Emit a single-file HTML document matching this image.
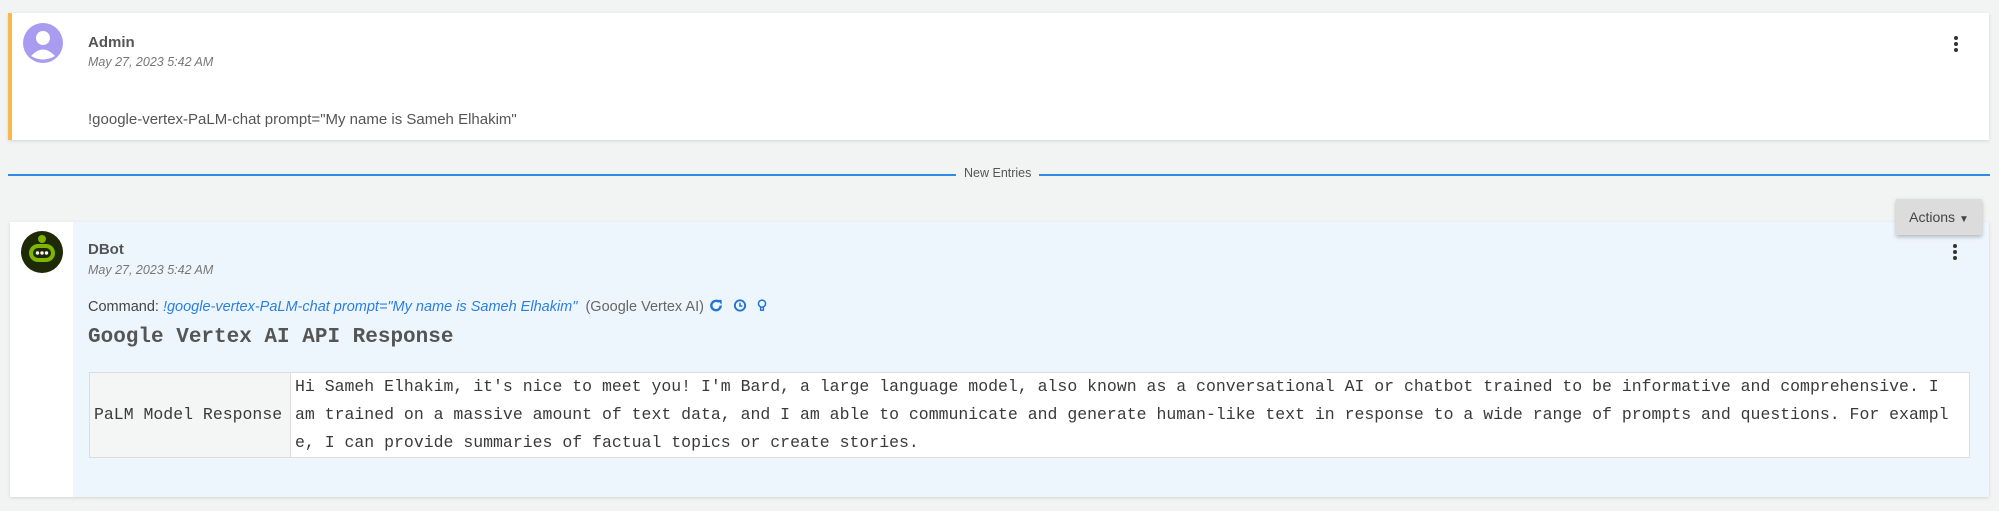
<!DOCTYPE html>
<html><head><meta charset="utf-8">
<style>
html,body{margin:0;padding:0;width:1999px;height:511px;overflow:hidden;background:#f2f3f3;font-family:"Liberation Sans",sans-serif;}
.card{position:absolute;background:#fff;box-shadow:0 1px 3px rgba(0,0,0,.12);}
#c1{left:8px;top:13px;width:1981px;height:127px;border-left:4px solid #f6b94f;box-sizing:border-box;}
.name{position:absolute;font-size:15px;color:#555;font-weight:bold;}
.date{position:absolute;font-size:12.5px;color:#777;font-style:italic;}
.dots{position:absolute;width:4px;}
.dots i{display:block;width:4px;height:4px;border-radius:50%;background:#333;margin-bottom:2px;}
#sep{position:absolute;left:8px;top:174px;width:1982px;height:2px;background:#2f8ae6;}
#sepl{position:absolute;left:956px;top:166px;padding:0 8px;background:#f2f3f3;font-size:12.5px;color:#555;}
#c2{left:10px;top:222px;width:1979px;height:275px;background:#eef6fd;}
#strip{position:absolute;left:0;top:0;width:63px;height:100%;background:#fff;}
#act{position:absolute;left:1896px;top:199px;width:86px;height:36px;background:#dcdcdc;box-shadow:0 2px 4px rgba(0,0,0,.25);font-size:14px;color:#444;line-height:36px;text-align:center;}
table{position:absolute;left:79px;top:150px;border-collapse:collapse;font-family:"Liberation Mono",monospace;font-size:16.5px;color:#3a3a3a;background:#fff;}
td{border:1px solid #ddd;padding:0 5px;line-height:28px;}
td.l{background:#f4f5f5;width:192px;white-space:nowrap;padding:0 4px;}
td.r{width:1670px;white-space:nowrap;padding:0 4px;}
</style></head><body>
<div class="card" id="c1">
  <svg style="position:absolute;left:11px;top:10px" width="40" height="40" viewBox="0 0 40 40"><circle cx="20" cy="20" r="20" fill="#a99cf0"/><circle cx="20" cy="15" r="7" fill="#fff"/><path d="M8 33 Q20 20 32 33 Q20 40 8 33Z" fill="#fff"/></svg>
  <div class="name" style="left:76px;top:21px">Admin</div>
  <div class="date" style="left:76px;top:42px">May 27, 2023 5:42 AM</div>
  <div style="position:absolute;left:76px;top:98px;font-size:15px;color:#555">!google-vertex-PaLM-chat prompt="My name is Sameh Elhakim"</div>
  <div class="dots" style="left:1942px;top:23px"><i></i><i></i><i></i></div>
</div>
<div id="sep"></div>
<div id="sepl">New Entries</div>
<div class="card" id="c2">
  <div id="strip"></div>
  <svg style="position:absolute;left:11px;top:9px" width="42" height="42" viewBox="0 0 42 42"><circle cx="21" cy="21" r="21" fill="#1e2a07"/><circle cx="21" cy="8" r="4" fill="#7db500"/><rect x="8" y="13" width="26" height="18" rx="9" fill="#7db500"/><rect x="12" y="17" width="18" height="10" rx="5" fill="#1e2a07"/><circle cx="16.5" cy="22" r="1.7" fill="#fff"/><circle cx="21" cy="22" r="1.7" fill="#fff"/><circle cx="25.5" cy="22" r="1.7" fill="#fff"/></svg>
  <div class="name" style="left:78px;top:19px">DBot</div>
  <div class="date" style="left:78px;top:41px">May 27, 2023 5:42 AM</div>
  <div class="dots" style="left:1943px;top:22px"><i></i><i></i><i></i></div>
  <div style="position:absolute;left:78px;top:76px;font-size:14.5px;color:#444;white-space:nowrap">Command: <span style="color:#2a7ee0;font-style:italic">!google-vertex-PaLM-chat prompt="My name is Sameh Elhakim"</span> <span style="color:#666">&nbsp;(Google Vertex AI)</span>
  <svg width="16" height="15" viewBox="0 0 16 16" style="vertical-align:-2px"><path d="M13 8A5 5 0 1 1 11 4" fill="none" stroke="#1f72d6" stroke-width="2.5"/><path d="M9 2h5v5z" fill="#1f72d6"/></svg>
  <svg width="16" height="15" viewBox="0 0 16 16" style="vertical-align:-2px;margin-left:4px"><circle cx="8" cy="8" r="5.5" fill="none" stroke="#1f72d6" stroke-width="2"/><path d="M8 5v3.5H10.5" fill="none" stroke="#1f72d6" stroke-width="1.6"/></svg>
  <svg width="12" height="15" viewBox="0 0 12 16" style="vertical-align:-2px;margin-left:4px"><circle cx="6" cy="6" r="3.8" fill="none" stroke="#1f72d6" stroke-width="1.6"/><path d="M4.5 10v3h3v-3" fill="none" stroke="#1f72d6" stroke-width="1.5"/></svg></div>
  <div style="position:absolute;left:78px;top:104px;font-family:'Liberation Mono',monospace;font-weight:bold;font-size:21px;color:#555">Google Vertex AI API Response</div>
  <table><tr><td class="l">PaLM Model Response</td><td class="r">Hi Sameh Elhakim, it's nice to meet you! I'm Bard, a large language model, also known as a conversational AI or chatbot trained to be informative and comprehensive. I<br>am trained on a massive amount of text data, and I am able to communicate and generate human-like text in response to a wide range of prompts and questions. For exampl<br>e, I can provide summaries of factual topics or create stories.</td></tr></table>
</div>
<div id="act">Actions <span style="font-size:10px">&#9660;</span></div>
</body></html>
